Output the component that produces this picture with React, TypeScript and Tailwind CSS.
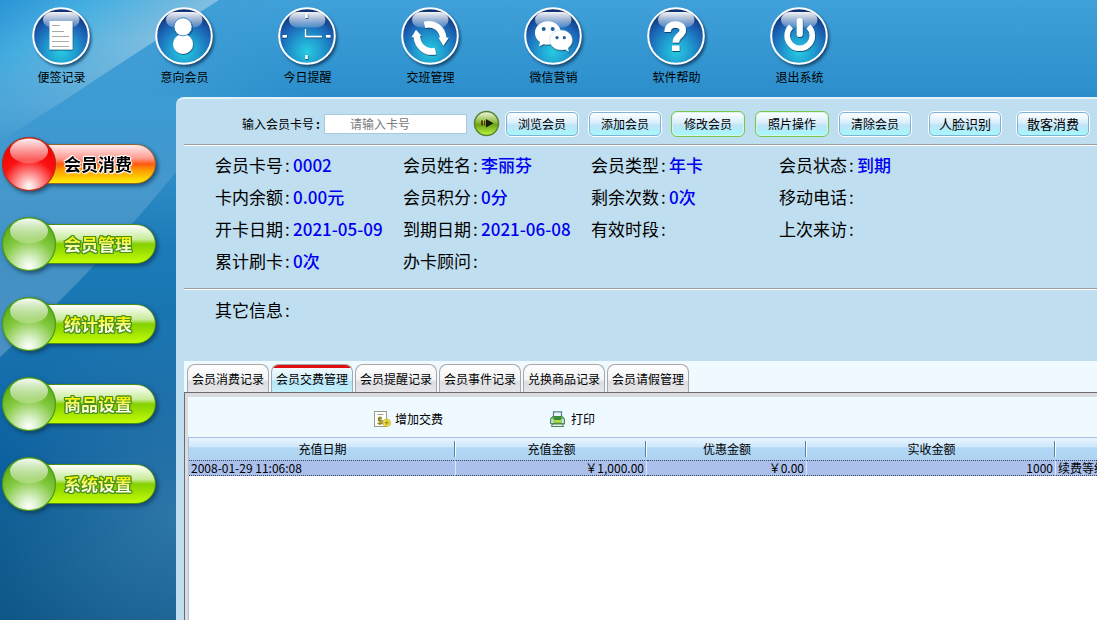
import React from 'react';

const topItems = [
  { label: '便签记录', icon: 'note' },
  { label: '意向会员', icon: 'person' },
  { label: '今日提醒', icon: 'clock' },
  { label: '交班管理', icon: 'swap' },
  { label: '微信营销', icon: 'wechat' },
  { label: '软件帮助', icon: 'help' },
  { label: '退出系统', icon: 'power' },
];

const sideItems = ['会员消费', '会员管理', '统计报表', '商品设置', '系统设置'];

const info: { label: string; value: string }[] = [
  { label: '会员卡号', value: '0002' },
  { label: '会员姓名', value: '李丽芬' },
  { label: '会员类型', value: '年卡' },
  { label: '会员状态', value: '到期' },
  { label: '卡内余额', value: '0.00元' },
  { label: '会员积分', value: '0分' },
  { label: '剩余次数', value: '0次' },
  { label: '移动电话', value: '' },
  { label: '开卡日期', value: '2021-05-09' },
  { label: '到期日期', value: '2021-06-08' },
  { label: '有效时段', value: '' },
  { label: '上次来访', value: '' },
  { label: '累计刷卡', value: '0次' },
  { label: '办卡顾问', value: '' },
];

const tabs = ['会员消费记录', '会员交费管理', '会员提醒记录', '会员事件记录', '兑换商品记录', '会员请假管理'];

function Glyph({ name }: { name: string }) {
  switch (name) {
    case 'note':
      return (
        <g>
          <rect x="20.5" y="17" width="23" height="28.5" fill="#fff" />
          <path d="M23 21.5h8M23 27.5h12M23 32.5h17M23 37.5h17M23 42.5h17" stroke="#a9a9a9" strokeWidth="1" />
        </g>
      );
    case 'person':
      return (
        <g fill="#fff">
          <circle cx="31" cy="40" r="10" />
          <circle cx="31" cy="22.8" r="9" stroke="#1f78b8" strokeWidth="0.8" />
        </g>
      );
    case 'clock':
      return (
        <g stroke="#fff" fill="none">
          <path d="M31.5 9.5v4.5M31.5 51v4M7.5 32.2h4.5M51 32.2h4.5" strokeWidth="2.4" />
          <path d="M30.5 25v7.500h16.500" strokeWidth="1.300" />
        </g>
      );
    case 'swap':
      return (
        <g fill="none" stroke="#fff" strokeWidth="6.500">
          <path d="M26.500 20.800C36 18.500 44.500 24 45.300 34.500" />
          <path d="M37.500 47C28 49.500 19.500 42.500 18.700 32" />
          <path d="M40.500 33.500l10.200.3-5.400 8zM13.500 33.300l9.800-1.500L18 25.800z" fill="#fff" stroke="none" />
        </g>
      );
    case 'wechat':
      return (
        <g fill="#fff">
          <path d="M27 17.300c-7.200 0-13 5.100-13 11.700 0 3.800 1.900 7 5 9.200l-1 4.300 4.800-2.500c1.300.4 2.700.6 4.200.6 7.200 0 13-5.100 13-11.600s-5.800-11.700-13-11.700z" />
          <path
            d="M40 26c-6.300 0-11.300 4.400-11.300 10S33.700 46 40 46c1.500 0 2.900-.2 4.100-.6l3.600 2.400-.7-3.700c2.700-1.900 4.300-4.700 4.300-8.100 0-5.600-5-10-11.300-10z"
            stroke="#8fc0dc"
            strokeWidth="0.400"
          />
          <g fill="#1d5f9c">
            <circle cx="22.700" cy="25" r="2" />
            <circle cx="31.700" cy="25" r="2" />
            <circle cx="36" cy="33.700" r="1.600" />
            <circle cx="43.300" cy="33.700" r="1.600" />
          </g>
        </g>
      );
    case 'help':
      return (
        <g>
          <path d="M23.500 28C23.500 22.500 27 20.500 31.500 20.500c4.600 0 7.300 2 7.300 5.700 0 5.300-7 5.300-7 12.300" fill="none" stroke="#fff" strokeWidth="6.400" />
          <rect x="28" y="41.500" width="7.500" height="5.500" fill="#fff" />
        </g>
      );
    default:
      return (
        <g fill="none" stroke="#fff">
          <path d="M24 22.500a12.600 12.600 0 1 0 17.400 0" strokeWidth="5.500" />
          <path d="M32.700 17v13" strokeWidth="6" strokeLinecap="round" />
        </g>
      );
  }
}

function OrbIcon({ name }: { name: string }) {
  return (
    <svg width="65" height="64" viewBox="0 0 65 64" className="overflow-visible" aria-hidden="true">
      <defs>
        <radialGradient id={'orb-' + name} cx="0.5" cy="0.78" r="0.75">
          <stop offset="0" stopColor="#27cbe0" />
          <stop offset="0.35" stopColor="#209cd0" />
          <stop offset="0.7" stopColor="#1b62b4" />
          <stop offset="1" stopColor="#10306f" />
        </radialGradient>
        <linearGradient id={'gloss-' + name} x1="0" y1="0" x2="0" y2="1">
          <stop offset="0" stopColor="#fff" stopOpacity="0.95" />
          <stop offset="1" stopColor="#fff" stopOpacity="0.2" />
        </linearGradient>
        <filter id={'blur-' + name} x="-20%" y="-20%" width="150%" height="150%">
          <feGaussianBlur stdDeviation="1.600" />
        </filter>
        <filter id={'cast-' + name} x="-20%" y="-20%" width="150%" height="150%">
          <feDropShadow dx="0.500" dy="1" stdDeviation="0.700" floodColor="#06305c" floodOpacity="0.8" />
        </filter>
      </defs>
      <circle cx="34" cy="34.500" r="28.500" fill="#0a3355" opacity="0.75" filter={'url(#blur-' + name + ')'} />
      <circle cx="32" cy="32" r="27.800" fill={'url(#orb-' + name + ')'} stroke="#fff" strokeWidth="2" />
      <rect x="14" y="8" width="36.500" height="15.500" rx="9" ry="7.700" fill={'url(#gloss-' + name + ')'} />
      <g filter={'url(#cast-' + name + ')'}>
        <Glyph name={name} />
      </g>
    </svg>
  );
}

function SideOrb({ id, red }: { id: string; red: boolean }) {
  return (
    <svg viewBox="0 0 56 56" className="relative size-14 shrink-0" aria-hidden="true">
      <defs>
        <radialGradient id={'ball-' + id} cx="0.5" cy="0.92" r="0.85">
          <stop offset="0" stopColor="#fff" />
          <stop offset="0.2" stopColor={red ? '#ffb0b0' : '#d8f0c8'} />
          <stop offset="0.6" stopColor={red ? '#fb1212' : '#85c940'} />
          <stop offset="1" stopColor={red ? '#f00000' : '#55ad10'} />
        </radialGradient>
        <linearGradient id={'shine-' + id} x1="0" y1="0" x2="0" y2="1">
          <stop offset="0" stopColor="#fff" stopOpacity="0.95" />
          <stop offset="1" stopColor="#fff" stopOpacity="0.2" />
        </linearGradient>
      </defs>
      <circle cx="28" cy="28" r="26.500" fill={'url(#ball-' + id + ')'} stroke={red ? '#b0301c' : '#4a9a20'} strokeWidth="1.200" />
      <ellipse cx="28" cy="15" rx="19" ry="12.500" fill={'url(#shine-' + id + ')'} />
    </svg>
  );
}

function Backdrop() {
  return (
    <svg className="absolute left-0 top-0" width="260" height="400" viewBox="0 0 260 400" aria-hidden="true">
      <defs>
        <linearGradient id="sweep" gradientUnits="userSpaceOnUse" x1="0" y1="0" x2="70" y2="105">
          <stop offset="0" stopColor="#2a93d6" />
          <stop offset="0.4" stopColor="#45aee0" />
          <stop offset="1" stopColor="#84bfe0" />
        </linearGradient>
        <linearGradient id="sweepFade" gradientUnits="userSpaceOnUse" x1="0" y1="40" x2="0" y2="142">
          <stop offset="0" stopColor="#fff" />
          <stop offset="1" stopColor="#fff" stopOpacity="0.05" />
        </linearGradient>
        <mask id="sweepMask" maskUnits="userSpaceOnUse" x="0" y="0" width="260" height="400">
          <rect width="260" height="400" fill="url(#sweepFade)" />
        </mask>
        <linearGradient id="band" gradientUnits="userSpaceOnUse" x1="0" y1="110" x2="0" y2="357">
          <stop offset="0" stopColor="#a4cce8" stopOpacity="0" />
          <stop offset="0.35" stopColor="#a4cce8" stopOpacity="0.24" />
          <stop offset="1" stopColor="#a4c8e4" stopOpacity="0.36" />
        </linearGradient>
      </defs>
      <path d="M0 110V357Q95 272 176 172V110Z" fill="url(#band)" />
      <path d="M0 0H219Q140 50 65 100Q30 122 0 142Z" fill="url(#sweep)" mask="url(#sweepMask)" />
    </svg>
  );
}

function ActionButton({ label, green, large, className }: { label: string; green?: boolean; large?: boolean; className?: string }) {
  return (
    <button
      type="button"
      className={
        'h-[26px] w-[74px] shrink-0 whitespace-nowrap rounded-md border ' +
        (green ? 'border-[#78c84c] ' : 'border-white ') +
        (className ?? '')
      }
    >
      <span
        className={
          'flex size-full items-center justify-center rounded-[5px] border bg-[linear-gradient(#fbfeff_0%,#d9eefb_45%,#bfe3f7_55%,#a5f8fb_100%)] ' +
          (green ? 'border-[#d8f3e8] ' : 'border-[#7fb2d6] ') +
          (large ? 'text-[13px]' : 'text-xs')
        }
      >
        {label}
      </span>
    </button>
  );
}

function Field({ label, value }: { label: string; value: string }) {
  return (
    <div className="flex h-8 items-center whitespace-nowrap text-[17px]">
      <dt className="w-[78px] shrink-0">
        {label}<span className="pl-0.5">:</span>
      </dt>
      <dd className="font-medium text-[#0000f0]">{value}</dd>
    </div>
  );
}

function BillIcon() {
  return (
    <svg width="17" height="17" viewBox="0 0 17 17" aria-hidden="true">
      <rect x="0.500" y="0.500" width="12" height="15" fill="#fff" stroke="#9c9c8c" />
      <path d="M3.500 3.500h6" stroke="#9aa08a" />
      <path d="M8 7H4.500v2.500H8v3H3.500M6 5.500v8.500" stroke="#8a8420" strokeWidth="1.300" fill="none" />
      <circle cx="12.800" cy="11.800" r="3.800" fill="#f4e24a" stroke="#c0a820" strokeWidth="0.700" />
      <path d="M10.500 11.800h4.600M12.800 9.500v4.600" stroke="#8e8618" strokeWidth="1" />
    </svg>
  );
}

function PrinterIcon() {
  return (
    <svg width="15" height="17" viewBox="0 0 15 17" aria-hidden="true">
      <path d="M3.500 6V0.800h8V6" fill="#e8f6fa" stroke="#5b7c88" strokeWidth="1.200" />
      <path d="M2.500 5.500h10l2 2.500v5h-14V8z" fill="#6cb44c" stroke="#4f7f58" strokeWidth="0.900" />
      <path d="M1.200 8h2.300v4H1.200zM11.500 8h2.300v4h-2.300z" fill="#c4e4dc" />
      <path d="M4 5h7v4H4z" fill="#3c8c3c" />
      <path d="M4 9h7v2.500H4z" fill="#b0dc48" />
      <path d="M2.500 13h10l1 2.500h-12z" fill="#e6f4ee" stroke="#3f6f48" strokeWidth="0.900" />
    </svg>
  );
}

const headCell =
  'relative h-[22px] p-0 text-center font-normal after:absolute after:bottom-[3px] after:right-0 after:top-[3px] after:w-0.5 after:border-l after:border-l-[#4a86a8] after:bg-white last:after:hidden';
const bodyCell =
  'overflow-hidden whitespace-nowrap border-y border-r border-y-[#33415e] border-r-[#dce8f8] [border-block-style:dotted] p-0 px-0.5 leading-[14px] last:border-r-0';

export default function App() {
  return (
    <div className="relative flex min-h-screen flex-col overflow-hidden bg-[linear-gradient(#409fd6_0px,#3d9bd3_110px,#2a89c4_190px,#1b7bb8_250px,#1873b0_340px,#0c609e_460px,#0f5c90_540px,#0f5788_620px)] font-['Liberation_Sans','Noto_Sans_CJK_SC',sans-serif] text-xs text-black">
      <div className="absolute inset-x-0 top-0 h-[97px] bg-[linear-gradient(#40a0d9,#2b8ecb)] [mask-image:linear-gradient(to_right,transparent_150px,black_300px)]" />
      <div className="absolute bottom-0 left-0 h-[300px] w-44 bg-[radial-gradient(ellipse_at_100%_65%,#3a80b0b0_0%,transparent_75%)]" />
      <Backdrop />

      <header className="relative h-[97px]">
        <nav className="flex pt-1 font-['Noto_Sans_CJK_SC',sans-serif]">
          {topItems.map((t) => (
            <button key={t.label} type="button" className="flex w-[123px] shrink-0 flex-col items-center">
              <OrbIcon name={t.icon} />
              <span className="leading-[18px]">{t.label}</span>
            </button>
          ))}
        </nav>
      </header>

      <div className="relative flex flex-1">
        <aside className="w-44 shrink-0 pl-px pt-[39px]">
          <nav className="flex flex-col gap-6">
            {sideItems.map((s, i) => (
              <button key={s} type="button" className="flex h-14 items-center text-left drop-shadow-[2px_2px_2px_#0a2c48b0]">
                <SideOrb id={String(i)} red={i === 0} />
                <span
                  className={
                    '-ml-6 flex h-10 w-[123px] items-center rounded-r-full border pl-[30px] ' +
                    (i === 0
                      ? 'border-[#98632c] bg-[linear-gradient(#ffecec_0%,#ff9a90_35%,#ff5a10_50%,#ff9800_65%,#fff000_100%)]'
                      : 'border-[#4a8f1c] bg-[linear-gradient(#ffffff_0%,#c8ec98_38%,#84d000_50%,#9ce000_70%,#c4ff00_100%)]')
                  }
                >
                  <span
                    className={
                      "font-['Noto_Sans_CJK_SC',sans-serif] text-[17px] font-bold leading-6 " +
                      (i === 0
                        ? 'text-black [text-shadow:1px_0_1px_#fff,-1px_0_1px_#fff,0_1px_1px_#fff,0_-1px_1px_#fff,1px_1px_1px_#fff,-1px_-1px_1px_#fff]'
                        : 'bg-[linear-gradient(#f4f400_25%,#ffffe8_75%)] bg-clip-text text-transparent [filter:drop-shadow(1px_0_0_#4a9018)_drop-shadow(-1px_0_0_#4a9018)_drop-shadow(0_1px_0_#4a9018)_drop-shadow(0_-1px_0_#4a9018)]')
                    }
                  >
                    {s}
                  </span>
                </span>
              </button>
            ))}
          </nav>
        </aside>

        <main className="flex min-w-0 flex-1 flex-col rounded-tl-lg border-t-2 border-t-[#e4f3fb] bg-[#bfdeef] pl-2 font-['Noto_Sans_CJK_SC',sans-serif]">
          <form className="flex h-[46px] items-center border-b border-b-[#9a9ea4] pl-[58px] pr-1.5 pt-1" onSubmit={(e) => e.preventDefault()}>
            <label htmlFor="card" className="w-[82px] shrink-0 whitespace-nowrap">
              输入会员卡号<span className="pl-0.5 font-bold">:</span>
            </label>
            <input
              id="card"
              type="text"
              placeholder="请输入卡号"
              className="h-5 w-[143px] shrink-0 border border-[#a9c9e2] bg-white pl-[25px] text-xs outline-none placeholder:text-[#7a7a7a]"
            />
            <button type="submit" aria-label="查询" className="ml-1.5 shrink-0">
              <svg width="27" height="27" viewBox="0 0 27 27" aria-hidden="true">
                <defs>
                  <linearGradient id="go" x1="0" y1="0" x2="0" y2="1">
                    <stop offset="0" stopColor="#f0f8e4" />
                    <stop offset="0.450" stopColor="#8cba3c" />
                    <stop offset="0.550" stopColor="#6ba416" />
                    <stop offset="1" stopColor="#c0f840" />
                  </linearGradient>
                </defs>
                <circle cx="13.500" cy="13.500" r="12" fill="url(#go)" stroke="#5a8030" strokeWidth="1.400" />
                <path d="M13 9l7.500 4.200-7.500 4.200z" fill="#161c08" />
                <path d="M8 10.500h2v5H8zM11 10.500h1.200v5H11z" fill="#5a3c08" />
              </svg>
            </button>
            <ActionButton label="浏览会员" className="ml-[5px]" />
            <ActionButton label="添加会员" className="ml-[9px]" />
            <ActionButton label="修改会员" green className="ml-[9px]" />
            <ActionButton label="照片操作" green className="ml-2.5" />
            <ActionButton label="清除会员" className="ml-[9px]" />
            <ActionButton label="人脸识别" large className="ml-4" />
            <ActionButton label="散客消费" large className="ml-3.5" />
          </form>

          <section className="border-t border-t-white">
            <dl className="grid grid-cols-[repeat(4,188px)] pb-[11px] pl-[31px] pt-[3px]">
              {info.map((f) => (
                <Field key={f.label} label={f.label} value={f.value} />
              ))}
            </dl>
          </section>
          <section className="h-[73px] border-t border-t-[#9a9ea4] shadow-[inset_0_1px_0_#fff]">
            <dl className="pl-[31px] pt-[5px]">
              <Field label="其它信息" value="" />
            </dl>
          </section>

          <section className="flex flex-1 flex-col bg-[#eefaff]">
            <div role="tablist" className="flex h-[31px] items-end gap-0.5 pl-[3px]">
              {tabs.map((t, i) => (
                <button
                  key={t}
                  type="button"
                  role="tab"
                  aria-selected={i === 1}
                  className={
                    'h-7 w-[82px] shrink-0 whitespace-nowrap rounded-t-lg border-x border-t border-[#a8a8ac] ' +
                    (i === 1
                      ? 'bg-[linear-gradient(#e01010_0px,#e01010_3px,#f0fbff_3px,#d4f1fc_55%,#b4e6f8_60%,#c4effb_100%)]'
                      : 'bg-[linear-gradient(#ffffff_0%,#f2f2f4_55%,#dedee2_62%,#e6e6ea_100%)]')
                  }
                >
                  {t}
                </button>
              ))}
            </div>
            <div className="flex flex-1 flex-col border-l border-t border-[#6b6b70] bg-[#dcdce0] pl-[3px] pt-1">
              <div className="flex h-10 shrink-0 items-center bg-[#eefaff] pt-1">
                <button type="button" className="ml-[186px] flex items-center gap-1">
                  <BillIcon />
                  增加交费
                </button>
                <button type="button" className="ml-[107px] flex items-center gap-1.5">
                  <PrinterIcon />
                  打印
                </button>
              </div>
              <div className="flex-1 border-l border-t border-[#a9bfe0] bg-white">
                <table className="w-full table-fixed border-separate border-spacing-0">
                  <colgroup>
                    <col className="w-[267px]" />
                    <col className="w-[191px]" />
                    <col className="w-40" />
                    <col className="w-[249px]" />
                    <col />
                  </colgroup>
                  <thead>
                    <tr className="bg-[linear-gradient(#e8f5ff_0%,#cfe7fa_40%,#b2d8f5_45%,#add3f1_100%)]">
                      <th className={headCell}>充值日期</th>
                      <th className={headCell}>充值金额</th>
                      <th className={headCell}>优惠金额</th>
                      <th className={headCell}>实收金额</th>
                      <th className={headCell} aria-label="备注" />
                    </tr>
                  </thead>
                  <tbody>
                    <tr className="bg-[#abc0eb]">
                      <td className={bodyCell + ' text-left'}>2008-01-29 11:06:08</td>
                      <td className={bodyCell + ' text-right'}>￥1,000.00</td>
                      <td className={bodyCell + ' text-right'}>￥0.00</td>
                      <td className={bodyCell + ' text-right'}>1000</td>
                      <td className={bodyCell + ' text-left'}>续费等级</td>
                    </tr>
                  </tbody>
                </table>
              </div>
            </div>
          </section>
        </main>
      </div>
    </div>
  );
}
